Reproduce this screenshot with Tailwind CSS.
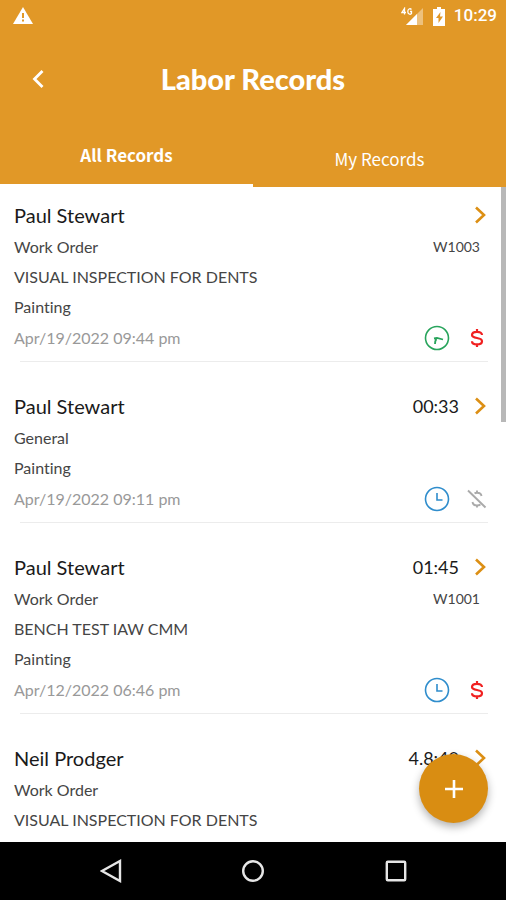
<!DOCTYPE html>
<html lang="en">
<head>
    <meta charset="UTF-8">
    <meta name="viewport" content="width=device-width, initial-scale=1.0">
    <title>Labor Records</title>
    <script src="https://cdn.jsdelivr.net/npm/@tailwindcss/browser@4"></script>
</head>
<body class="h-screen flex flex-col overflow-hidden bg-white font-[Lato,sans-serif] text-[#454545] [font-variant-ligatures:none]">
    <!-- Shared icons -->
    <svg class="hidden">
        <symbol id="chevron" viewBox="0 0 12 18"><path d="M2 1.500l8 7.500-8 7.500" fill="none" stroke="currentColor" stroke-width="2.600"/></symbol>
        <symbol id="clock" viewBox="0 0 26 26"><g fill="none" stroke="currentColor"><circle cx="13" cy="13" r="11.500" stroke-width="1.600"/><path d="M13 7v7h5.500" stroke-width="1.600"/></g></symbol>
        <symbol id="clock-running" viewBox="0 0 26 26"><g fill="none" stroke="currentColor"><circle cx="13" cy="13" r="11.500" stroke-width="1.600"/><path d="M11 19c0-2 .5-4 1.500-5.200M10 13.500l3-.5 6 1.500" stroke-width="1.800"/></g></symbol>
        <symbol id="dollar" viewBox="0 0 14 20"><path d="M7 1v3M7 16v3M12 7c0-2-2-3.200-5-3.200S2 5 2 7s2 2.500 5 3 5 1.200 5 3.200-2 3.200-5 3.200-5-1.200-5-3.200" fill="none" stroke="currentColor" stroke-width="2.200"/></symbol>
        <symbol id="dollar-off" viewBox="0 0 20 20"><path d="M1 1.500l17.500 17M10 1.500v2.500M10 16v2.500M14.500 7c-.3-2-2-3.200-4.500-3.200-1 0-1.800.2-2.500.6M5.500 13c.3 2.200 2 3.400 4.500 3.400 1.400 0 2.600-.4 3.400-1" fill="none" stroke="currentColor" stroke-width="1.900"/></symbol>
    </svg>

    <header class="shrink-0 bg-[#e19827] text-white">
        <div class="flex h-8 items-center justify-between pl-[13px] pr-[9px]">
            <svg class="h-[18px] w-5" viewBox="0 0 20 18"><path d="M10 0l10 17H0z" fill="#fff"/><path d="M10 6v5M10 12.500v2" stroke="#e19827" stroke-width="2"/></svg>
            <div class="flex items-center font-[Roboto,sans-serif]">
                <svg class="mr-[10px] h-[18px] w-[22px]" viewBox="0 0 22 18">
                    <path d="M22 1v17H5z" fill="#fff" opacity=".4"/><path d="M16 7v11H5z" fill="#fff"/>
                    <path d="M3.500 7.500V1.500L1 5.500h4M10.500 2.500C9 1 6.800 2 6.800 4.500S9 8 10.500 6.500v-2H9" fill="none" stroke="#fff" stroke-width="1.300"/>
                </svg>
                <svg class="mr-[9px] h-[19px] w-3" viewBox="0 0 12 19"><path d="M4 0h4v2h4v17H0V2h4z" fill="#fff"/><path d="M7.500 5L3 11h2.500v5L10 9.500H7z" fill="#e19827"/></svg>
                <span class="text-[17px] font-medium">10:29</span>
            </div>
        </div>
        <div class="grid h-[94px] grid-cols-[1fr_auto_1fr] items-center">
            <button type="button" aria-label="Back" class="ml-8 h-5 w-3"><svg class="h-5 w-3" viewBox="0 0 12 20"><path d="M10.500 2L2.500 10l8 8" fill="none" stroke="#fff" stroke-width="2.800"/></svg></button>
            <h1 class="text-[29px] font-black">Labor Records</h1>
        </div>
        <nav class="grid h-[61px] grid-cols-2 font-['Noto_Sans_CJK_SC',sans-serif] text-[17px]">
            <a href="#all" class="flex items-center justify-center border-b-[3px] border-white font-bold">All Records</a>
            <a href="#my" class="flex items-center justify-center pt-1">My Records</a>
        </nav>
    </header>

    <main class="relative min-h-0 flex-1 overflow-hidden pt-[11px]">
        <div class="absolute right-0 top-0 h-[235px] w-[5px] bg-[#b8b8b8]"></div>

        <article class="mb-[27px] text-base">
            <div class="flex h-[34px] items-center pl-[14px] pr-5 text-lg text-[#1a1a1a]">
                <h2 class="flex-1 text-xl">Paul Stewart</h2>
                <svg class="h-[18px] w-3 text-[#dc8f14]"><use href="#chevron"/></svg>
            </div>
            <div class="flex h-[30px] items-center justify-between pl-[14px] pr-[26px]"><p>Work Order</p><p class="text-sm">W1003</p></div>
            <p class="flex h-[30px] items-center pl-[14px]">VISUAL INSPECTION FOR DENTS</p>
            <p class="flex h-[30px] items-center pl-[14px]">Painting</p>
            <div class="flex h-8 items-center pl-[14px] pr-[22px] text-[#999]">
                <time class="flex-1">Apr/19/2022 09:44 pm</time>
                <svg class="mr-5 size-[26px] text-[#28a45c]"><use href="#clock-running"/></svg>
                <svg class="h-5 w-[14px] text-[#f02020]"><use href="#dollar"/></svg>
            </div>
            <hr class="ml-5 mr-[18px] mt-[7px] border-[#ececec]">
        </article>

        <article class="mb-[27px] text-base">
            <div class="flex h-[34px] items-center pl-[14px] pr-5 text-lg text-[#1a1a1a]">
                <h2 class="flex-1 text-xl">Paul Stewart</h2>
                <span class="mr-[15px]">00:33</span>
                <svg class="h-[18px] w-3 text-[#dc8f14]"><use href="#chevron"/></svg>
            </div>
            <p class="flex h-[30px] items-center pl-[14px]">General</p>
            <p class="flex h-[30px] items-center pl-[14px]">Painting</p>
            <div class="flex h-8 items-center pl-[14px] pr-[19px] text-[#999]">
                <time class="flex-1">Apr/19/2022 09:11 pm</time>
                <svg class="mr-[17px] size-[26px] text-[#2f8dcc]"><use href="#clock"/></svg>
                <svg class="size-5 text-[#aaa]"><use href="#dollar-off"/></svg>
            </div>
            <hr class="ml-5 mr-[18px] mt-[7px] border-[#ececec]">
        </article>

        <article class="mb-[27px] text-base">
            <div class="flex h-[34px] items-center pl-[14px] pr-5 text-lg text-[#1a1a1a]">
                <h2 class="flex-1 text-xl">Paul Stewart</h2>
                <span class="mr-[15px]">01:45</span>
                <svg class="h-[18px] w-3 text-[#dc8f14]"><use href="#chevron"/></svg>
            </div>
            <div class="flex h-[30px] items-center justify-between pl-[14px] pr-[26px]"><p>Work Order</p><p class="text-sm">W1001</p></div>
            <p class="flex h-[30px] items-center pl-[14px]">BENCH TEST IAW CMM</p>
            <p class="flex h-[30px] items-center pl-[14px]">Painting</p>
            <div class="flex h-8 items-center pl-[14px] pr-[22px] text-[#999]">
                <time class="flex-1">Apr/12/2022 06:46 pm</time>
                <svg class="mr-5 size-[26px] text-[#2f8dcc]"><use href="#clock"/></svg>
                <svg class="h-5 w-[14px] text-[#f02020]"><use href="#dollar"/></svg>
            </div>
            <hr class="ml-5 mr-[18px] mt-[7px] border-[#ececec]">
        </article>

        <article class="text-base">
            <div class="flex h-[34px] items-center pl-[14px] pr-5 text-lg text-[#1a1a1a]">
                <h2 class="flex-1 text-xl">Neil Prodger</h2>
                <span class="mr-[15px]">4.8:40</span>
                <svg class="h-[18px] w-3 text-[#dc8f14]"><use href="#chevron"/></svg>
            </div>
            <p class="flex h-[30px] items-center pl-[14px]">Work Order</p>
            <p class="flex h-[30px] items-center pl-[14px]">VISUAL INSPECTION FOR DENTS</p>
        </article>

        <button type="button" aria-label="Add record" class="absolute bottom-[19px] right-[18px] flex size-[69px] items-center justify-center rounded-full bg-[#d98d12] shadow-[0_4px_8px_rgba(0,0,0,0.3)]">
            <svg class="size-[18px]" viewBox="0 0 18 18"><path d="M9 0v18M0 9h18" stroke="#fff" stroke-width="2.600"/></svg>
        </button>
    </main>

    <footer class="grid h-[58px] shrink-0 grid-cols-[1fr_auto_1fr] items-center bg-black text-[#e6e6e6]">
        <button type="button" aria-label="Back" class="mr-[119px] justify-self-end"><svg class="h-6 w-[22px]" viewBox="0 0 22 24"><path d="M20 2v20L2 12z" fill="none" stroke="currentColor" stroke-width="2.400"/></svg></button>
        <button type="button" aria-label="Home"><svg class="size-6" viewBox="0 0 24 24"><circle cx="12" cy="12" r="9.800" fill="none" stroke="currentColor" stroke-width="2.400"/></svg></button>
        <button type="button" aria-label="Overview" class="ml-[119px] justify-self-start"><svg class="size-6" viewBox="0 0 24 24"><rect x="2.800" y="2.800" width="18.400" height="18.400" rx="1" fill="none" stroke="currentColor" stroke-width="2.400"/></svg></button>
    </footer>
</body>
</html>
